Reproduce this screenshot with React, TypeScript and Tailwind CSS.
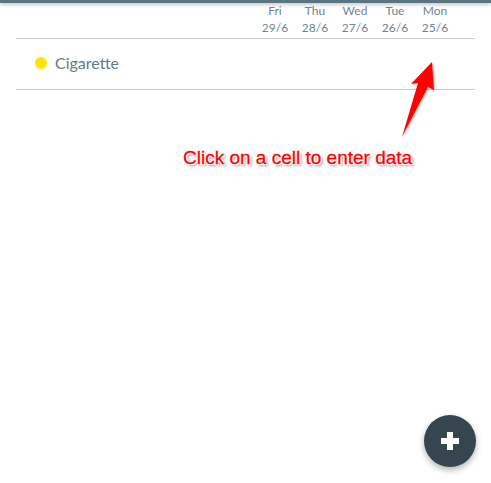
const days = [
  { name: "Fri", date: "29/6" },
  { name: "Thu", date: "28/6" },
  { name: "Wed", date: "27/6" },
  { name: "Tue", date: "26/6" },
  { name: "Mon", date: "25/6" },
];

export default function App() {
  return (
    <div className="relative w-[491px] h-[483px] bg-white overflow-hidden font-['Lato',sans-serif]">
      {/* app bar edge */}
      <div className="absolute left-0 right-0 top-0 h-[3px] bg-[#5b7482] shadow-[0_1px_4px_rgba(0,0,0,0.35)]" />

      <div className="px-4">
        <div className="flex justify-end pr-5 pt-[2px] h-[39px] border-b border-[#cfcfcf]">
          {days.map((d) => (
            <div key={d.name} className="w-10 text-center text-[12px] leading-[17px] text-[#6f8591]">
              <div>{d.name}</div>
              <div>{d.date}</div>
            </div>
          ))}
        </div>

        <div className="flex items-center h-[51px] pb-[2px] border-b border-[#cfcfcf] pl-[19px]">
          <span className="w-3 h-3 rounded-full bg-[#ffe500]" />
          <span className="ml-2 text-[16px] text-[#5f7a8c]">Cigarette</span>
        </div>
      </div>

      {/* hint overlay */}
      <svg className="absolute left-0 top-0 pointer-events-none" width="491" height="483">
        <defs>
          <filter id="sh" x="-50%" y="-50%" width="200%" height="200%">
            <feDropShadow dx="1" dy="1" stdDeviation="1.2" floodColor="#000" floodOpacity="0.3" />
          </filter>
        </defs>
        <polygon
          points="432,62 434,90 428,87 402,137 418,83 411,84"
          fill="#ff0000"
          filter="url(#sh)"
        />
      </svg>
      <div className="absolute left-[183px] top-[145px] text-[19px] leading-[26px] text-[#ff0000] font-['Liberation_Sans',sans-serif] [-webkit-text-stroke:0.3px_#ff0000] [text-shadow:-1px_-1px_0_#fff,1px_-1px_0_#fff,-1px_1px_0_#fff,1px_1px_0_#fff,2px_2px_3px_rgba(0,0,0,0.5)]">
        Click on a cell to enter data
      </div>

      {/* add button */}
      <button className="absolute left-[424px] top-[415px] w-[52px] h-[52px] rounded-full bg-[#36464f] flex items-center justify-center shadow-[0_3px_6px_rgba(0,0,0,0.3)]">
        <svg width="20" height="20" viewBox="0 0 20 20">
          <rect x="7" y="1" width="6" height="18" fill="#fff" />
          <rect x="1" y="7" width="18" height="6" fill="#fff" />
        </svg>
      </button>
    </div>
  );
}
